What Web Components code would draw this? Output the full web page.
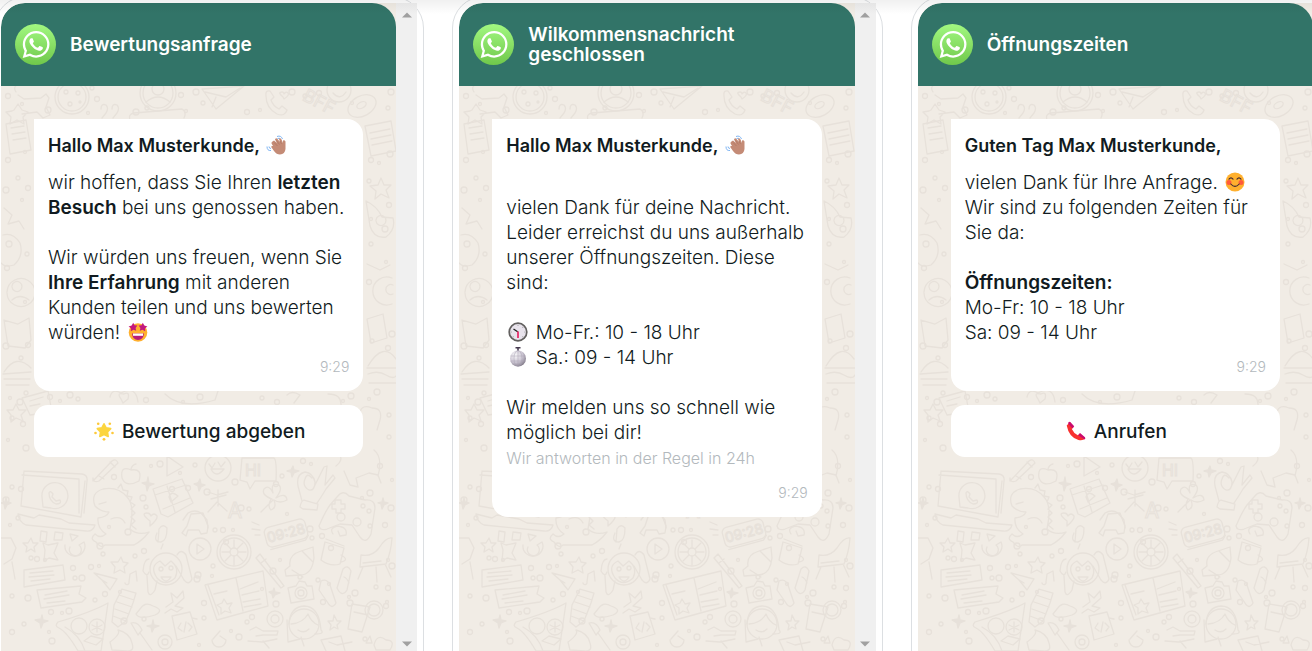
<!DOCTYPE html>
<html lang="de">
<head>
<meta charset="utf-8">
<meta name="viewport" content="width=device-width, initial-scale=1">
<title>WhatsApp Vorlagen</title>
<style>
body { margin: 0; background: #fff; color: #111b21; font-family: Inter, "Liberation Sans", sans-serif; }
p { margin: 0; }
p + p { margin-top: 25px; }
b { font-weight: 600; }
.note { color: #b3b9bd; font-size: 16px; }
</style>
</head>
<body>
<template-carousel>
  <phone-preview>
    <span slot="title">Bewertungsanfrage</span>
    <chat-bubble>
      <span slot="greeting">Hallo Max Musterkunde, <emoji-icon name="wave"></emoji-icon></span>
      <p>wir hoffen, dass Sie Ihren <b>letzten Besuch</b> bei uns genossen haben.</p>
      <p>Wir würden uns freuen, wenn Sie <b>Ihre Erfahrung</b> mit anderen Kunden teilen und uns bewerten würden! <emoji-icon name="starstruck"></emoji-icon></p>
    </chat-bubble>
    <reply-button><emoji-icon name="star"></emoji-icon><span>Bewertung abgeben</span></reply-button>
  </phone-preview>
  <phone-preview>
    <span slot="title">Wilkommensnachricht geschlossen</span>
    <chat-bubble spaced>
      <span slot="greeting">Hallo Max Musterkunde, <emoji-icon name="wave"></emoji-icon></span>
      <p>vielen Dank für deine Nachricht. Leider erreichst du uns außerhalb unserer Öffnungszeiten. Diese sind:</p>
      <p><emoji-icon name="clock"></emoji-icon> Mo-Fr.: 10 - 18 Uhr<br><emoji-icon name="ball"></emoji-icon> Sa.: 09 - 14 Uhr</p>
      <p>Wir melden uns so schnell wie möglich bei dir!<br><span class="note">Wir antworten in der Regel in 24h</span></p>
    </chat-bubble>
  </phone-preview>
  <phone-preview>
    <span slot="title">Öffnungszeiten</span>
    <chat-bubble>
      <span slot="greeting">Guten Tag Max Musterkunde,</span>
      <p>vielen Dank für Ihre Anfrage. <emoji-icon name="smile"></emoji-icon><br>Wir sind zu folgenden Zeiten für Sie da:</p>
      <p><b>Öffnungszeiten:</b><br>Mo-Fr: 10 - 18 Uhr<br>Sa: 09 - 14 Uhr</p>
    </chat-bubble>
    <reply-button><emoji-icon name="phone"></emoji-icon><span>Anrufen</span></reply-button>
  </phone-preview>
</template-carousel>

<script>
function define(name, render) {
  customElements.define(name, class extends HTMLElement {
    constructor() { super(); this.attachShadow({ mode: 'open' }); }
    connectedCallback() { this.shadowRoot.innerHTML = render(this); }
  });
}

const emojis = {
  wave: `<g fill="none" stroke="#7eb4f2" stroke-width="1"><path d="M11 1.500Q15 0 16.500 4M11.500 3.500Q14 2.500 14.500 4.500M1 11.500Q1 16 5 15.500M3 11.500Q3 13.500 5 13.500"/></g>
    <path fill="#c48b76" d="M6.500 6.500 8 5.500 11 8 9 4.500Q10 2.500 11.500 4L14 7 13 4Q14 2.500 15.500 4.500L17 8 17 5.500Q18.500 4.500 19.500 6.500V14Q19 19 14 19.500 10.500 19.500 8 16L5.200 12Q5.200 10.500 7 11L5.500 8.500Q5.300 7 6.500 6.500Z"/>
    <path fill="none" stroke="#ad7562" stroke-width=".7" d="M8 7.500 11.500 11M10.500 5.500 13.500 9.500M14 6 15.500 9"/>`,
  starstruck: `<circle cx="10" cy="10.500" r="9.300" fill="#ffb02e"/><path fill="#b91c7a" d="M4 11.500H16Q15.500 18 10 18T4 11.500Z"/><path fill="#fff" d="M5 11.500H15V13.800H5Z"/>
    <path fill="#c3197c" d="M5.200.800 6.500 3.300 9.400 3.600 7.600 5.900 8.200 8.800 5.500 7.800 2.800 9.300 2.900 6.300.600 4.500 3.700 3.500ZM14.800.800 13.500 3.300 10.600 3.600 12.400 5.900 11.800 8.800 14.500 7.800 17.200 9.300 17.100 6.300 19.400 4.500 16.300 3.500Z"/>`,
  star: `<path fill="#fcd53f" stroke="#fcd53f" stroke-width="1.600" stroke-linejoin="round" d="M10 2.800 12.100 6.900 16.700 7.600 13.500 10.900 14.200 15.500 10 13.500 5.800 15.500 6.500 10.900 3.300 7.600 7.900 6.900Z"/>
    <g fill="#fdc93a"><circle cx="4.200" cy="2.800" r="1.300"/><circle cx="15.800" cy="2.800" r="1.300"/><circle cx="1.500" cy="12" r="1.300"/><circle cx="18.500" cy="12" r="1.300"/><circle cx="10" cy="18.300" r="1.400"/></g>`,
  clock: `<circle cx="10" cy="10" r="8.800" fill="#e8e3ec" stroke="#62605f" stroke-width="1.700"/><path fill="none" stroke="#222" stroke-width="1.400" d="M10 10 5.500 7"/><path stroke="#e83f78" stroke-width="2" d="M10 9.500V16"/>
    <g fill="#888"><circle cx="10" cy="3.200" r=".5"/><circle cx="16.800" cy="10" r=".5"/><circle cx="3.200" cy="10" r=".5"/><circle cx="14.800" cy="5.200" r=".5"/><circle cx="14.800" cy="14.800" r=".5"/><circle cx="5.200" cy="14.800" r=".5"/></g>`,
  ball: `<defs><radialGradient id="g" cx=".35" cy=".3" r=".8"><stop offset="0" stop-color="#faf9fb"/><stop offset=".55" stop-color="#cbc5d2"/><stop offset="1" stop-color="#77707f"/></radialGradient></defs>
    <path stroke="#45394f" stroke-width="1.500" d="M7.500 .800H12.500M10 .800V4"/><circle cx="10" cy="11.500" r="8" fill="url(#g)"/>
    <g fill="none" stroke="#a9a2b2" stroke-width=".5"><path d="M2.500 9H17.500M2.500 14H17.500M10 3.500V19.500"/><ellipse cx="10" cy="11.500" rx="4" ry="8"/></g>`,
  smile: `<circle cx="10" cy="10" r="9.500" fill="#ffb02e"/><circle cx="4" cy="10.500" r="2.500" fill="#ff5a3c"/><circle cx="16" cy="10.500" r="2.500" fill="#ff5a3c"/>
    <g fill="none" stroke="#402a32" stroke-width="1.100" stroke-linecap="round"><path d="M4 7.200Q6 4.500 8 7.200M12 7.200Q14 4.500 16 7.200M5.800 12Q10 16.800 14.200 12"/></g>`,
  phone: `<path fill="#f8312f" d="M.700 4.500 4 1 7.500 6 5.800 8Q7.500 12 11.800 14.300L14 12.500 19.300 17.500Q17 20 12.500 19 3 16.500.700 4.500Z"/>
    <path fill="#ca0b6e" d="M2.300 1.500Q3.300.300 4.500 1.300L8.200 5.300 6.500 7.500 2.300 2.800ZM12.200 14.200 14 12 19 16.200Q19.800 17.500 18.600 18.400Z"/>`
};

define('emoji-icon', el => `
  <style>
    :host { display: inline-block; width: 24px; height: 20px; vertical-align: -3px; }
    svg { display: block; width: 20px; height: 20px; margin: 0 auto; }
  </style>
  <svg viewBox="0 0 20 20" aria-hidden="true">${emojis[el.getAttribute('name')]}</svg>`);

/* Faint chat wallpaper: small line drawings spread over a 396 by 565 sheet. */
const bubbles = [
  [8,96],[22,104],[48,110],[92,88],[97,99],[88,113],[136,112],[147,108],[181,95],[186,111],[196,92],[203,103],[247,112],[260,110],[292,92],[305,96],[319,93],[352,103],[391,92],[388,108],
  [8,160],[25,152],[6,190],[18,178],[28,188],[22,200],[9,244],[27,254],[7,268],[25,302],[6,346],[21,358],[28,345],[10,398],[20,402],[26,393],
  [371,160],[379,163],[390,154],[369,181],[389,205],[371,219],[385,229],[371,244],[369,282],[386,262],[392,334],[372,341],[388,348],[369,399],[377,392],[389,415],
  [50,397],[60,401],[70,395],[78,399],[146,400],[183,402],[200,397],[262,398],[277,402],[343,401],[351,396],
  [12,418],[23,424],[8,440],[26,448],[389,437],[380,466],[392,480],[391,508],[370,526],[385,525],[388,560],[392,566],
  [12,487],[21,489],[10,525],[6,500],[18,518],[114,477],[151,466],[160,464],[195,465],[303,461],[311,464],[235,482],[282,476],[172,489],[180,473],[143,498],[146,507],[188,488],[199,484],[207,492],[215,530],[223,530],[233,530],[241,508],[249,509],[276,484],[287,514],[310,529],[312,538],[322,536],[362,498],[370,493],
  [31,558],[37,559],[45,560],[100,546],[103,554],[91,567],[99,566],[82,578],[75,578],[73,568],[109,527],[128,532],[135,556],[144,551],[212,576],[198,575],[213,566],[226,542],[280,560],[273,571],[318,580],[331,548],[349,597],[355,593],[376,587],[388,588],[387,602],
  [28,598],[12,596],[51,612],[62,613],[69,611],[24,624],[12,632],[49,632],[52,641],[95,600],[105,594],[120,592],[197,579],[204,618],[204,603],[231,631],[239,637],[247,622],[252,617],[262,589],[276,604],[300,577],[323,602],[329,584],[350,603],[365,639],[386,606],[199,645],[124,621],[144,619]
];
const wallpaper = `
<svg class="wall" viewBox="1 86 396 565" preserveAspectRatio="xMinYMin slice" aria-hidden="true">
  <g fill="none" stroke="#e7e1da" stroke-width="1.300" stroke-linejoin="round" stroke-linecap="round">
    ${bubbles.map(([x, y], i) => `<circle cx="${x}" cy="${y}" r="${[2.5, 1.5, 3, 2][i % 4]}"/>`).join('')}
    <path d="M16 92Q12 86 20 84M18 95 24 99 41 98 46 94 49 98 46 107 50 115 43 118 37 112 22 114M14 110 18 104 22 110 28 112 23 117 24 124 17 120 10 124 11 117 6 112 12 111Z"/>
    <circle cx="72" cy="97" r="17"/><circle cx="72" cy="97" r="14"/><g><circle cx="66" cy="92" r="2"/><circle cx="78" cy="93" r="2"/><circle cx="70" cy="104" r="2"/><circle cx="80" cy="102" r="1"/></g>
    <circle cx="158" cy="93" r="18"/><circle cx="158" cy="93" r="15"/><circle cx="158" cy="89" r="6"/><path d="M146 102Q158 92 170 102"/>
    <path d="M202 89 244 86 216 109ZM205 92 226 97 240 88M216 97 212 107M101 109Q101 103 106 105 109 108 106 113L102 118M112 109Q112 103 117 105 120 108 117 113L113 118M130 120Q128 114 134 113L182 109Q187 112 184 118"/>
    <path d="M266 96Q265 90 270 91L274 97 271 100Q273 106 279 109L282 106 287 110Q285 117 277 114 266 108 266 96ZM283 97Q277 92 282 92 284 92 284 94 286 91 288 93 290 95 284 99Z"/>
    <circle cx="339" cy="90" r="12"/><path d="M333 93Q340 101 346 92"/><g transform="rotate(-28 362 106)"><ellipse cx="362" cy="106" rx="15" ry="10"/><ellipse cx="362" cy="105" rx="5" ry="3"/></g>
    <path d="M6 124 26 120 31 150 10 154ZM11 128 24 126M12 134 25 132M13 140 26 138M4 208 12 215 8 224 19 221 24 229M3 235Q13 232 20 243 24 256 14 265 5 268 1 263M7 292A14 14 0 1 1 7 293M12 286A5 5 0 1 1 12 287M12 300Q20 293 29 300M4 320 18 324 29 318 31 340 25 348 8 346ZM4 372Q16 353 31 368M3 374 31 372M4 379 30 379M6 385 29 385"/>
    <path d="M365 126 391 121 396 151 371 156ZM370 133 390 129M371 139 391 135M372 145 392 141M381 178 384 185 391 185 386 190 389 198 381 194 375 199 376 191 370 186 378 185ZM366 201Q377 206 382 217L393 218Q396 229 386 237 374 239 370 226ZM376 220A5 5 0 1 1 376 221M367 264 380 270 390 265M392 278A14 14 0 1 0 392 304M393 285A5 5 0 1 0 393 294M367 319 383 314 387 338 371 343ZM368 366Q383 341 396 359M367 368H397M368 374Q378 370 386 375T397 375M369 383H397"/>
    <path d="M22 398 48 391 52 412 30 415ZM30 401 43 397M30 406 40 404M16 404 19 410 26 410 21 415 23 421 16 418 11 422 11 415 7 410 13 410ZM110 397Q112 388 121 393 136 385 138 402M121 399Q116 392 124 394 130 391 128 399L123 403ZM165 394Q181 410 215 400L218 391M287 395Q292 390 300 395L294 403M328 394Q342 394 341 406M360 412Q362 404 372 408 383 408 380 420L377 430"/>
    <path d="M24 471 82 474Q88 475 87 481L84 513M24 471 21 506 81 517 85 481M22 475 79 479 79 513M18 514 34 518 39 515 61 519 69 523 95 525Q93 532 86 531L26 525Q19 522 18 514ZM43 507 42 497A13 13 0 1 1 51 508ZM49 493Q50 490 53 494L52 497 56 501 60 500Q62 504 56 504 49 501 49 493Z"/>
    <path d="M93 481 112 461Q116 458 118 463L99 481Q93 483 93 478ZM99 476 104 479M110 462 115 467M131 470Q120 465 122 478 126 488 139 481 143 468 131 470ZM131 469Q132 465 136 464"/>
    <path d="M95 506Q90 493 103 489 118 486 127 497 135 505 130 529 138 536 149 532 142 541 134 545H105Q101 549 96 542 89 539 95 534 100 539 106 534 97 528 98 518 107 517 109 512 101 512 95 506ZM111 519Q121 515 125 523M118 488 121 484 123 490 128 491 127 496 132 497 130 502 135 505 131 509 135 513 131 517 135 521 131 525 136 529M99 504 106 502"/>
    <path d="M153 489 182 479 193 503 168 517 161 514ZM155 495 186 485M163 509 190 498M167 486 175 512M169 497Q171 490 178 496L171 502ZM167 456 183 467 167 476ZM150 521Q140 513 147 513 150 513 151 516 154 512 157 516 158 519 150 526ZM157 533Q153 542 161 542 167 541 167 528 163 523 159 529L158 542M163 544 161 549"/>
    <circle cx="218" cy="468" r="13"/><path d="M211 469Q216 479 224 469ZM209 464 212 468 215 463M218 462 221 467 225 462M242 458H274Q277 460 276 481H255L250 489 247 482 240 480ZM183 520 188 513Q195 509 201 513L207 520 208 528"/>
    <path d="M208 492 217 495 228 492M218 490V506M211 499 226 495M208 512 217 502 227 511M272 499Q261 495 264 489 269 484 273 493 270 482 279 485 283 489 276 498 286 492 287 500 280 504 274 500 277 508 271 510 267 506 271 499ZM273 500 261 512"/>
    <path d="M300 507Q301 501 304 500L318 504 317 510 303 509ZM302 501 298 486Q296 474 305 472 313 473 315 482 315 491 309 490 302 486 305 479 307 472 312 478M313 489 324 467 327 466 325 485 333 475 335 478 326 489Q320 499 317 503M319 526Q325 512 330 505L337 497Q343 489 349 496L365 500Q375 499 375 508L371 534Q366 545 360 537L352 525 340 524 327 529Q320 531 319 526ZM335 504V500H341V504H345V509H341V513H336V509H332V504Z"/><circle cx="357" cy="522" r="4"/><circle cx="341" cy="517" r="4"/><circle cx="363" cy="506" r="2"/><circle cx="369" cy="511" r="2"/>
    <path d="M336 466Q344 460 339 454M344 471 350 485 358 487 356 478 369 473 378 475 381 483M378 476Q383 457 374 450M182 533 187 526 191 514 203 513 208 526 207 533 201 534 199 530H188L186 536Z"/>
    <g transform="rotate(-15 286 533)"><rect x="265" y="523" width="42" height="20" rx="5"/><path d="M267 545H303L307 541"/></g><path d="M252 522 259 525M252 529 260 530M255 535H260"/>
    <circle cx="234" cy="552" r="17"/><circle cx="234" cy="552" r="14"/><circle cx="234" cy="552" r="4"/><path d="M234 540V548M234 556V565M222 552H230M238 552H246M225 543 231 549M237 555 243 561M225 561 231 555M237 549 243 543"/><circle cx="200" cy="549" r="11"/><path d="M197 544 204 549 197 554Z"/>
    <path d="M41 531 47 532 46 542 40 541ZM55 532 63 533 62 540 54 540ZM43 543 48 545 58 543 54 553 58 560 49 558 44 561 45 550ZM65 545A10 10 0 1 0 84 542L79 545A6 6 0 1 1 70 547M70 534 78 536 72 541ZM31 538 33 543 38 543 34 547 35 552 31 549 26 552 27 547 23 543 28 543ZM1 538 11 538 16 548 12 559 4 564M12 562 15 579M24 570 63 565 65 580 24 587ZM30 573 53 571M29 577 54 575M31 581 50 579M37 590 81 586 79 594 86 598 82 602 41 608ZM45 595 67 591M44 599 69 595M47 603 65 601"/>
    <path d="M121 557 123 562 128 563 124 567 125 573 120 570 114 573 115 567 111 562 118 562ZM94 573 117 579 110 590 102 580ZM102 580 107 583M129 582 130 574 136 571 137 581M129 582A2 2 0 1 1 125 583M149 559Q144 559 143 571 147 578 149 572M177 555Q181 548 186 555L192 579Q189 586 184 580L176 566M147 576 148 592Q150 598 155 590L157 581"/>
    <circle cx="166" cy="569" r="16"/><path d="M157 578Q149 566 160 561L165 566 171 561Q180 568 175 578 165 587 157 578ZM161 577Q166 585 171 577Z"/><circle cx="161" cy="569" r="2"/><circle cx="171" cy="568" r="2"/>
    <path d="M205 585 263 571 268 606 217 620ZM236 578 243 611M208 585 219 615M214 594 227 591M240 589 258 582M242 595 259 591M243 602 260 599M244 607 261 604M224 599 227 604 232 603 229 608 231 613 225 611 221 614 221 608 217 605 222 603ZM256 558 260 554 284 586 281 588ZM261 563 266 559M290 566Q288 555 301 551L313 547 314 558Q312 575 300 575L286 576 285 570ZM292 570 303 577M302 551 313 562M325 542 344 548 340 564Q330 567 321 560ZM326 539 344 546M341 555Q350 560 341 562M333 534Q329 528 337 526 348 527 346 535L340 536 338 531"/>
    <path d="M360 567 361 555Q372 557 379 548 386 537 392 538 391 552 386 564ZM363 563 381 561M363 567 358 579M376 567 377 582M385 564 391 577M343 569Q348 564 351 571L347 590Q342 598 337 588ZM344 577Q347 578 349 583M321 581Q327 578 330 585L336 603Q332 610 328 603L319 590ZM288 588 296 586 299 581 305 582 307 586 312 586 314 599 291 603Z"/><circle cx="301" cy="593" r="6"/><circle cx="301" cy="593" r="3"/>
    <path d="M58 622Q54 626 59 628 67 632 78 651H101L108 603Q92 612 58 622ZM65 627Q80 635 85 651M114 605 122 589 136 593 133 603 126 621 118 627 112 622ZM119 595 134 600M117 602 132 607M115 609 129 614M113 616 126 621M140 609Q145 601 153 606 165 610 155 615 139 620 136 614ZM166 607 173 602 171 593 177 598 183 591 184 598 175 606 183 608 177 612 171 609 165 613"/>
    <circle cx="79" cy="626" r="8"/><circle cx="97" cy="627" r="8"/><path d="M97 622V632M92 625 102 630M92 630 102 625M84 641 91 636 103 639 96 645ZM110 642Q121 634 118 630 130 633 132 643 135 652 126 651L112 650Z"/>
    <path d="M131 623Q138 621 142 630L138 635ZM140 633 152 650M172 616 190 612 197 634 177 640ZM190 612 192 618 197 619M181 623 178 628 182 631M188 623 192 627 189 631M186 622 184 632M158 642A7 7 0 1 0 172 642 7 7 0 1 0 158 642M162 642A3 3 0 1 0 168 642 3 3 0 1 0 162 642M212 640A7 7 0 1 0 226 640L220 636M213 639 220 631M250 630 256 627 263 631H278L277 635H263L256 636M248 641 262 642 277 639M263 641 269 648"/>
    <circle cx="275" cy="619" r="8"/><circle cx="275" cy="619" r="4"/><circle cx="304" cy="624" r="15"/><path d="M289 624Q290 607 304 606 319 606 321 630 325 634 315 634M287 620 288 642 300 639M291 624Q303 623 308 614 311 622 318 625M298 630Q304 634 309 629M301 637 304 646"/>
    <path d="M334 615 337 621 341 621 337 625 338 629 334 627 330 630 331 625 328 621 333 621ZM352 604 370 607 362 632 348 629ZM354 612 368 615M370 636 366 643 372 643ZM321 640 341 636 345 651M321 640 326 651M329 642 337 645 352 642M374 645Q377 633 386 640 396 640 390 650H376Z"/><circle cx="374" cy="610" r="9"/><circle cx="374" cy="610" r="6"/>
    <path fill="#e7e1da" d="M148 477 149 483 154 484 149 486 147 491 146 485 142 483 147 482ZM200 479 201 484 205 485 201 487 199 491 198 486 194 484 198 483ZM293 466 294 470 299 471 294 473 292 477 291 472 287 471 291 470ZM6 498 7 502 11 503 7 505 5 509 4 504 1 503 5 502ZM383 498 384 502 388 503 384 505 382 509 381 504 378 503 382 502ZM42 615 43 620 48 621 43 623 41 628 40 623 35 620 41 619ZM153 620 154 625 159 626 154 628 152 632 151 627 147 626 152 625ZM274 588 275 592 280 593 275 595 273 598 272 594 269 592 273 591Z"/>
  </g>
  <g font-family="Inter, sans-serif" font-weight="400" fill="none" stroke="#e7e1da" text-anchor="middle">
    <text x="253" y="476" font-size="16">HI</text>
    <text x="235" y="518" font-size="21">A</text>
    <text x="286" y="538" font-size="14" transform="rotate(-15 286 533)">09:28</text>
    <text x="319" y="108" font-size="18" transform="rotate(28 319 102)">BFF</text>
  </g>
</svg>`;

define('template-carousel', () => `
  <style>
    :host { display: block; position: relative; height: 100vh; min-height: 560px; overflow: hidden; }
    .track { display: grid; grid-template-columns: repeat(3, minmax(0, 1fr)); gap: 28px; margin: -4px -29px 0 -6px; height: calc(100% + 11px); }
    .shade { position: absolute; inset: 0 0 auto 0; height: 14px; background: linear-gradient(rgba(0,0,0,.06), rgba(0,0,0,0)); pointer-events: none; }
  </style>
  <main class="track"><slot></slot></main>
  <div class="shade"></div>`);

define('phone-preview', () => `
  <style>
    :host { display: flex; box-sizing: border-box; border: 1px solid #dcdfe2; border-radius: 32px 32px 0 0; padding: 6px; background: #fff; min-width: 0; }
    .screen { position: relative; isolation: isolate; flex: 1; min-width: 0; overflow: hidden; background: #f1ece5; border-top-left-radius: 24px; }
    .wall { position: absolute; z-index: -1; inset: 83px 0 0 0; width: 100%; height: calc(100% - 83px); }
    header { display: flex; align-items: center; gap: 14px; box-sizing: border-box; min-height: 83px; padding: 0 14px; background: #327468; color: #fff; border-radius: 24px 24px 0 0; }
    .logo { flex: none; width: 41px; height: 41px; }
    h2 { margin: 0; font-size: 19px; line-height: 20px; font-weight: 600; }
    .chat { display: flex; flex-direction: column; gap: 14px; padding: 33px; }
    .bar { flex: none; display: flex; flex-direction: column; justify-content: space-between; align-items: center; box-sizing: border-box; width: 21px; padding: 9px 0 4px; background: #f0f0f0; }
    .bar svg { width: 10px; height: 6px; fill: #a0a0a0; }
  </style>
  <article class="screen">
    ${wallpaper}
    <header>
      <svg class="logo" viewBox="0 0 41 41" role="img" aria-label="WhatsApp">
        <defs><linearGradient id="green" x2="0" y2="1"><stop stop-color="#a2f881"/><stop offset="1" stop-color="#70c84b"/></linearGradient></defs>
        <circle cx="20.500" cy="20.500" r="20.500" fill="url(#green)"/>
        <g transform="translate(7.700 7) scale(1.680)"><path fill="#fff" d="M13.601 2.326A7.854 7.854 0 0 0 7.994 0C3.627 0 .068 3.558.064 7.926c0 1.399.366 2.760 1.057 3.965L0 16l4.204-1.102a7.933 7.933 0 0 0 3.790.965h.004c4.368 0 7.926-3.558 7.930-7.930A7.898 7.898 0 0 0 13.600 2.326zM7.994 14.521a6.573 6.573 0 0 1-3.356-.920l-.240-.144-2.494.654.666-2.433-.156-.251a6.560 6.560 0 0 1-1.007-3.505c0-3.626 2.957-6.584 6.591-6.584a6.560 6.560 0 0 1 4.660 1.931 6.557 6.557 0 0 1 1.928 4.660c-.004 3.639-2.961 6.592-6.592 6.592zM11.609 9.587c-.197-.099-1.170-.578-1.353-.646-.182-.065-.315-.099-.445.099-.133.197-.513.646-.627.775-.114.133-.232.148-.430.050-.197-.100-.836-.308-1.592-.985-.590-.525-.985-1.175-1.103-1.372-.114-.198-.011-.304.088-.403.087-.088.197-.232.296-.346.100-.114.133-.198.198-.330.065-.134.034-.248-.015-.347-.050-.099-.445-1.076-.612-1.470-.160-.389-.323-.335-.445-.340-.114-.007-.247-.007-.380-.007a.729.729 0 0 0-.529.247c-.182.198-.691.677-.691 1.654 0 .977.710 1.916.810 2.049.098.133 1.394 2.132 3.383 2.992.470.205.840.326 1.129.418.475.152.904.129 1.246.080.380-.058 1.171-.480 1.338-.943.164-.464.164-.860.114-.943-.049-.084-.182-.133-.380-.232z"/></g>
      </svg>
      <h2><slot name="title"></slot></h2>
    </header>
    <div class="chat"><slot></slot></div>
  </article>
  <div class="bar" aria-hidden="true">
    <svg viewBox="0 0 10 6"><path d="M0 5.500 5 .500 10 5.500Z"/></svg>
    <svg viewBox="0 0 10 6"><path d="M0 .500 5 5.500 10 .500Z"/></svg>
  </div>`);

define('chat-bubble', () => `
  <style>
    :host { display: block; padding: 14px; background: #fff; border-radius: 0 16px 16px 16px; font-size: 19px; line-height: 25px; font-weight: 300; }
    h3 { margin: 0 0 12px; font-size: 18px; line-height: 25px; font-weight: 600; }
    :host([spaced]) h3 { margin-bottom: 37px; }
    time { display: block; margin-top: 12px; font-size: 14px; line-height: 20px; color: #b3b9bd; text-align: right; }
  </style>
  <h3><slot name="greeting"></slot></h3>
  <slot></slot>
  <time datetime="09:29">9:29</time>`);

define('reply-button', () => `
  <style>
    :host { display: block; }
    button { display: flex; align-items: center; justify-content: center; gap: 6px; width: 100%; height: 52px; padding: 0 14px; border: 0; border-radius: 14px; background: #fff; color: #111b21; font: 500 19px/25px Inter, "Liberation Sans", sans-serif; cursor: pointer; }
  </style>
  <button type="button"><slot></slot></button>`);
</script>
</body>
</html>
